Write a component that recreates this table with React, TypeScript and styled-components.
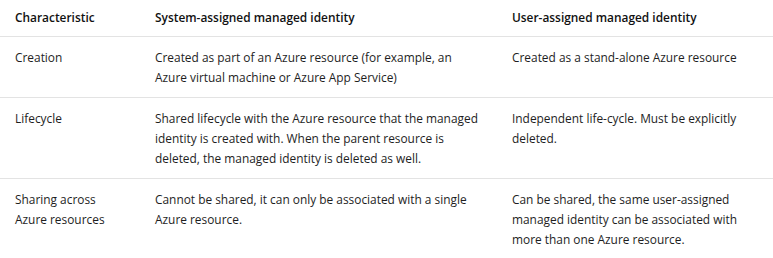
import * as React from 'react';
import styled, { createGlobalStyle } from 'styled-components';

const GlobalStyle = createGlobalStyle`
    html, body {
        margin: 0;
        padding: 0;
        background: #ffffff;
    }
    body {
        font-family: "Open Sans", "Noto Sans", "Liberation Sans", sans-serif;
    }
`;

const Table = styled.table`
    width: 773px;
    border-collapse: collapse;
    table-layout: fixed;
    font-size: 11.9px;
    line-height: 20px;
    color: #1e1e1e;
`;

const Col = styled.col<{ $width: number }>`
    width: ${p => p.$width}px;
`;

const HeadCell = styled.th`
    text-align: left;
    vertical-align: top;
    font-weight: 600;
    color: #111;
    padding: 7px 14px 9px 15px;
    border-bottom: 1px solid #e3e3e3;
`;

const Row = styled.tr`
    border-bottom: 1px solid #e3e3e3;
    &:last-child {
        border-bottom: none;
    }
`;

const Cell = styled.td`
    vertical-align: top;
    padding: 10px 14px 10px 15px;
`;

interface RowData {
    label: string;
    system: string;
    user: string;
}

const rows: RowData[] = [
    {
        label: 'Creation',
        system: 'Created as part of an Azure resource (for example, an Azure virtual machine or Azure App Service)',
        user: 'Created as a stand-alone Azure resource',
    },
    {
        label: 'Lifecycle',
        system: 'Shared lifecycle with the Azure resource that the managed identity is created with. When the parent resource is deleted, the managed identity is deleted as well.',
        user: 'Independent life-cycle. Must be explicitly deleted.',
    },
    {
        label: 'Sharing across Azure resources',
        system: 'Cannot be shared, it can only be associated with a single Azure resource.',
        user: 'Can be shared, the same user-assigned managed identity can be associated with more than one Azure resource.',
    },
];

const App: React.FC = () => {
    return (
        <>
            <GlobalStyle />
            <Table>
                <colgroup>
                    <Col $width={140} />
                    <Col $width={357} />
                    <Col $width={276} />
                </colgroup>
                <thead>
                    <tr>
                        <HeadCell>Characteristic</HeadCell>
                        <HeadCell>System-assigned managed identity</HeadCell>
                        <HeadCell>User-assigned managed identity</HeadCell>
                    </tr>
                </thead>
                <tbody>
                    {rows.map(r => (
                        <Row key={r.label}>
                            <Cell>{r.label}</Cell>
                            <Cell>{r.system}</Cell>
                            <Cell>{r.user}</Cell>
                        </Row>
                    ))}
                </tbody>
            </Table>
        </>
    );
};

export default App;
